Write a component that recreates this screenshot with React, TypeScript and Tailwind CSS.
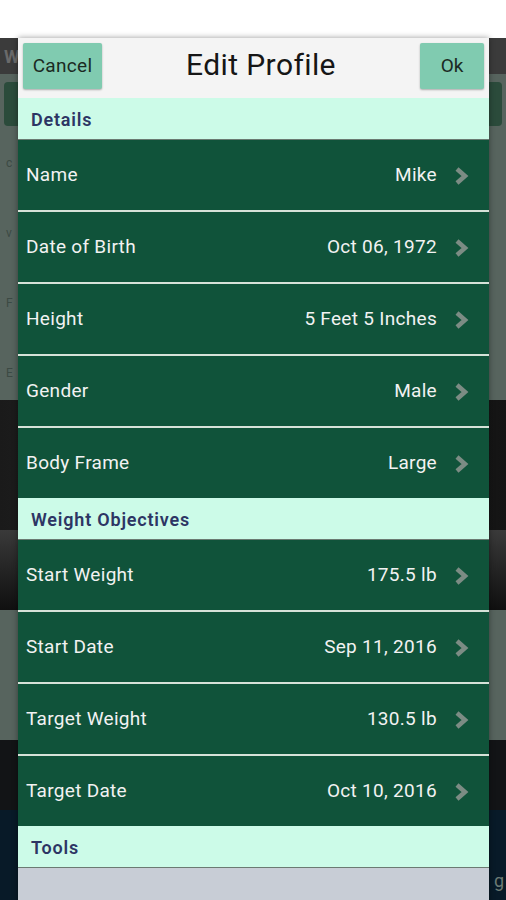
import React from "react";

const Chevron = () => (
  <svg width="18" height="20" viewBox="0 0 18 20" className="shrink-0">
    <path d="M5 3 L13 10 L5 17" fill="none" stroke="#7c8c84" strokeWidth="4.5" strokeLinecap="butt" strokeLinejoin="miter" />
  </svg>
);

const Row = ({ label, value, line }: { label: string; value: string; line: boolean }) => (
  <div className={`flex items-center bg-[#10533a] pl-[8px] pr-[19px] pt-[1px] text-[19px] tracking-[0.3px] text-[#f2f2f2] ${line ? "h-[72px] border-b-2 border-[#d6e2d8]" : "h-[70px]"}`}>
    <span className="flex-1">{label}</span>
    <span className="mr-[15px]">{value}</span>
    <Chevron />
  </div>
);

const Section = ({ title }: { title: string }) => (
  <div className="flex h-[42px] items-center border-b border-[#6b7a72] bg-[#ccfbe8] pl-[13px] pt-[2px] text-[18px] font-semibold tracking-[0.8px] text-[#2d3564]">
    {title}
  </div>
);

export default function App() {
  return (
    <div className="relative h-[900px] w-[506px] overflow-hidden bg-white" style={{ fontFamily: "Roboto, 'Noto Sans', sans-serif" }}>
      {/* dimmed app behind */}
      <div className="h-[38px] bg-white" />
      <div className="flex h-[36px] items-center bg-[#3b3b3b] pl-[4px] text-[18px] font-bold text-[#6a6a6a]">W</div>
      <div className="h-[326px] bg-[#57645e] px-[4px] pt-[8px]">
        <div className="h-[44px] rounded-sm bg-[#2b4b3b]" />
        <div className="flex flex-col gap-[52px] pt-[28px] pl-[2px] text-[12px] text-[#3c4a44]">
          <span>c</span>
          <span>v</span>
          <span>F</span>
          <span>E</span>
        </div>
      </div>
      <div className="h-[130px] bg-gradient-to-r from-[#1a1a1a] via-[#2e2e2e] to-[#141414]" />
      <div className="h-[80px] bg-gradient-to-b from-[#3a3a3a] to-[#101010]" />
      <div className="h-[130px] bg-[#57645e]" />
      <div className="h-[70px] bg-[#121416]" />
      <div className="flex h-[90px] items-center justify-end bg-[#081a28] pr-[2px] pt-[50px] text-[18px] text-[#6c7a74]">g</div>

      {/* dialog */}
      <div className="absolute left-[18px] top-[38px] w-[471px] shadow-[0_0_6px_rgba(0,0,0,0.4)]">
        <div className="flex h-[60px] items-start bg-[#f4f4f4] px-[5px] pt-[5px]">
          <button className="flex h-[46px] w-[79px] items-center justify-center rounded-[2px] bg-[#80cbb0] text-[19px] tracking-[0.3px] text-[#1b2a22] shadow-[0_1px_2px_rgba(0,0,0,0.3)]">
            Cancel
          </button>
          <div className="flex h-[46px] flex-1 items-center justify-center pb-[4px] text-[30px] tracking-[0.4px] text-[#161616]">Edit Profile</div>
          <button className="flex h-[46px] w-[64px] items-center justify-center rounded-[2px] bg-[#80cbb0] text-[19px] text-[#1b2a22] shadow-[0_1px_2px_rgba(0,0,0,0.3)]">
            Ok
          </button>
        </div>
        <Section title="Details" />
        <Row label="Name" value="Mike" line />
        <Row label="Date of Birth" value="Oct 06, 1972" line />
        <Row label="Height" value="5 Feet 5 Inches" line />
        <Row label="Gender" value="Male" line />
        <Row label="Body Frame" value="Large" line={false} />
        <Section title="Weight Objectives" />
        <Row label="Start Weight" value="175.5 lb" line />
        <Row label="Start Date" value="Sep 11, 2016" line />
        <Row label="Target Weight" value="130.5 lb" line />
        <Row label="Target Date" value="Oct 10, 2016" line={false} />
        <Section title="Tools" />
        <div className="h-[40px] bg-[#c8cdd6]" />
      </div>
    </div>
  );
}
